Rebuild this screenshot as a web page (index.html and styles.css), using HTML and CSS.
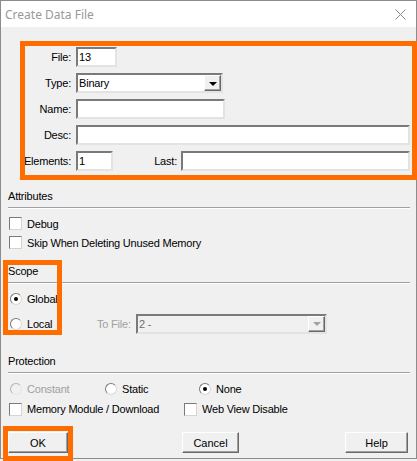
FILE: index.html
```html
<!DOCTYPE html>
<html lang="en">
<head>
    <meta charset="UTF-8">
    <title>Create Data File</title>
    <link rel="stylesheet" href="styles.css">
</head>
<body>
    <div class="window">
        <div class="titlebar">
            <span class="title">Create Data File</span>
            <svg class="close" width="11" height="11" viewBox="0 0 11 11">
                <path d="M0.5 0.5 L10.5 10.5 M10.5 0.5 L0.5 10.5" stroke="#8a8a8a" stroke-width="1" fill="none"/>
            </svg>
        </div>

        <div class="form">
            <label class="lbl">File:</label>
            <div><div class="field w-file">13</div></div>

            <label class="lbl">Type:</label>
            <div>
                <div class="combo w-type">
                    <span class="combo-text">Binary</span>
                    <span class="drop"><span class="arrow"></span></span>
                </div>
            </div>

            <label class="lbl">Name:</label>
            <div><div class="field w-name"></div></div>

            <label class="lbl">Desc:</label>
            <div><div class="field w-full"></div></div>

            <label class="lbl">Elements:</label>
            <div class="last-row">
                <div class="field w-elem">1</div>
                <label class="lbl last-lbl">Last:</label>
                <div class="field w-last"></div>
            </div>
        </div>

        <div class="section-head">Attributes</div>
        <div class="checks">
            <div class="opt"><span class="check"></span>Debug</div>
            <div class="opt"><span class="check"></span>Skip When Deleting Unused Memory</div>
        </div>

        <div class="section-head head-scope">Scope</div>
        <div class="scope">
            <div class="opt tall"><span class="radio on"></span>Global</div>
            <div class="opt tall">
                <span class="local"><span class="radio"></span>Local</span>
                <span class="tofile">To File:</span>
                <div class="combo disabled w-tofile">
                    <span class="combo-text">2 -</span>
                    <span class="drop"><span class="arrow"></span></span>
                </div>
            </div>
        </div>

        <div class="section-head head-prot">Protection</div>
        <div class="prot">
            <div class="row">
                <div class="opt col-a dim"><span class="radio off"></span>Constant</div>
                <div class="opt col-b"><span class="radio"></span>Static</div>
                <div class="opt"><span class="radio on"></span>None</div>
            </div>
            <div class="row">
                <div class="opt col-c"><span class="check"></span>Memory Module / Download</div>
                <div class="opt"><span class="check"></span>Web View Disable</div>
            </div>
        </div>

        <div class="buttons">
            <button class="btn btn-ok">OK</button>
            <button class="btn btn-cancel">Cancel</button>
            <button class="btn btn-help">Help</button>
        </div>
    </div>

    <!-- highlight marks drawn over the dialog -->
    <div class="mark mark-form"></div>
    <div class="mark mark-scope"></div>
    <div class="mark mark-ok"></div>
</body>
</html>
```

FILE: styles.css
```css
* { box-sizing: border-box; }
body { margin: 0; position: relative; width: 417px; height: 461px; overflow: hidden; background: #f0f0f0; font-family: "Liberation Sans", Arial, sans-serif; font-size: 11px; letter-spacing: -0.2px; color: #000; }

.window { width: 417px; height: 459px; border: 1px solid #8c8c8c; background: #f0f0f0; }
.titlebar { height: 26px; background: #fff; display: flex; align-items: center; justify-content: space-between; padding: 0 10px 0 4px; }
.title { font-family: "Noto Sans", "Open Sans", sans-serif; font-size: 12px; letter-spacing: 0; color: #999; }
.close { display: block; margin-top: 1px; }

.form { display: grid; grid-template-columns: 46px 334px; column-gap: 5px; row-gap: 6px; grid-auto-rows: 20px; margin: 20px 0 0 24px; }
.lbl { display: flex; align-items: center; justify-content: flex-end; white-space: nowrap; }
.field { height: 20px; background: #fff; border: 2px solid; border-color: #7a7a7a #e3e3e3 #e3e3e3 #7a7a7a; padding: 0 1px; display: flex; align-items: center; }
.w-file { width: 41px; }
.w-name { width: 149px; }
.w-full { width: 334px; }
.w-elem { width: 37px; }
.w-last { width: 229px; }
.last-row { display: flex; align-items: center; }
.last-lbl { margin-left: auto; margin-right: 4px; }

.combo { height: 20px; background: #fff; border: 2px solid; border-color: #7a7a7a #e3e3e3 #e3e3e3 #7a7a7a; display: flex; align-items: center; }
.combo-text { flex: 1; padding-left: 1px; }
.w-type { width: 147px; }
.drop { width: 17px; height: 16px; background: #f0f0f0; border: 1px solid; border-color: #fff #696969 #696969 #fff; box-shadow: inset -1px -1px 0 #a0a0a0; display: flex; align-items: center; justify-content: center; }
.arrow { width: 0; height: 0; border-left: 4px solid transparent; border-right: 4px solid transparent; border-top: 4px solid #000; margin-top: 1px; }

.disabled { background: #f0f0f0; color: #6d6d6d; }
.disabled .arrow { border-top-color: #a0a0a0; }
.local { width: 88px; display: flex; align-items: center; }
.tofile { width: 39px; color: #a0a0a0; }
.w-tofile { width: 191px; }

.section-head { margin: 19px 6px 0 7px; padding-bottom: 4px; line-height: 13px; border-bottom: 1px solid #a0a0a0; box-shadow: 0 1px 0 #fff; }
.head-scope { margin-top: 13px; }
.head-prot { margin-top: 19px; }

.checks { margin: 6px 0 0 8px; }
.scope { margin: 3px 0 0 8px; }
.prot { margin: 6px 0 0 8px; }
.opt { height: 19px; display: flex; align-items: center; white-space: nowrap; }
.tall { height: 25px; }
.prot .opt { height: 20px; }
.row { display: flex; }
.col-a { width: 95px; }
.col-b { width: 94px; }
.col-c { width: 175px; }
.dim { color: #a0a0a0; }

.check { width: 13px; height: 13px; background: #fff; border: 1px solid; border-color: #7a7a7a #d4d4d4 #d4d4d4 #7a7a7a; margin-right: 5px; flex: none; }
.radio { width: 12px; height: 12px; border-radius: 50%; background: #fff; border: 1px solid; border-color: #7a7a7a #d8d8d8 #d8d8d8 #7a7a7a; margin: 0 5px 0 1px; flex: none; position: relative; }
.radio.on::after { content: ""; position: absolute; left: 3px; top: 3px; width: 4px; height: 4px; border-radius: 50%; background: #000; }
.radio.off { background: #f0f0f0; border-color: #b4b4b4 #e6e6e6 #e6e6e6 #b4b4b4; }

.buttons { display: flex; margin: 13px 8px 0 7px; }
.btn { height: 21px; font-family: "Liberation Sans", Arial, sans-serif; font-size: 11px; color: #000; background: #f0f0f0; border: 1px solid; border-color: #fff #696969 #696969 #fff; box-shadow: inset -1px -1px 0 #a0a0a0; padding: 0; }
.btn-ok { width: 60px; }
.btn-cancel { width: 57px; margin-left: 114px; }
.btn-help { width: 63px; margin-left: auto; }

.mark { position: absolute; border: 5px solid #ff6c00; }
.mark-form { left: 20px; top: 41px; width: 397px; height: 139px; }
.mark-scope { left: 3px; top: 260px; width: 59px; height: 75px; }
.mark-ok { left: 3px; top: 426px; width: 70px; height: 35px; }
```
